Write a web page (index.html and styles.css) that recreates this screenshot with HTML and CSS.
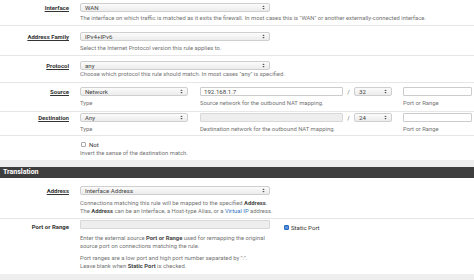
FILE: index.html
```html
<!DOCTYPE html>
<html>
<head>
<meta charset="utf-8">
<link rel="stylesheet" href="styles.css">
</head>
<body>
<div class="page">
  <div class="row r1">
    <div class="lbl"><span class="req">Interface</span></div>
    <div class="ctl">
      <div class="select w190"><span>WAN</span><svg class="arr" viewBox="0 0 4 6"><path d="M2 0.3L3.6 2.4H0.4Z M2 5.7L0.4 3.6H3.6Z"/></svg></div>
      <div class="help m2 wide">The interface on which traffic is matched as it exits the firewall. In most cases this is "WAN" or another externally-connected interface.</div>
    </div>
  </div>
  <div class="row r2">
    <div class="lbl"><span class="req">Address Family</span></div>
    <div class="ctl">
      <div class="select w190"><span>IPv4+IPv6</span><svg class="arr" viewBox="0 0 4 6"><path d="M2 0.3L3.6 2.4H0.4Z M2 5.7L0.4 3.6H3.6Z"/></svg></div>
      <div class="help m3 wide">Select the Internet Protocol version this rule applies to.</div>
    </div>
  </div>
  <div class="row r3">
    <div class="lbl"><span class="req">Protocol</span></div>
    <div class="ctl">
      <div class="select w190"><span>any</span><svg class="arr" viewBox="0 0 4 6"><path d="M2 0.3L3.6 2.4H0.4Z M2 5.7L0.4 3.6H3.6Z"/></svg></div>
      <div class="help m0 wide">Choose which protocol this rule should match. In most cases "any" is specified.</div>
    </div>
  </div>
  <div class="row r4">
    <div class="lbl"><span class="req">Source</span></div>
    <div class="ctl multi">
      <div class="col c1">
        <div class="select"><span>Network</span><svg class="arr" viewBox="0 0 4 6"><path d="M2 0.3L3.6 2.4H0.4Z M2 5.7L0.4 3.6H3.6Z"/></svg></div>
        <div class="help m3">Type</div>
      </div>
      <div class="col c2">
        <div class="addr">
          <div class="input a">192.168.1.7</div>
          <div class="slash">/</div>
          <div class="select mask"><span>32</span><svg class="arr" viewBox="0 0 4 6"><path d="M2 0.3L3.6 2.4H0.4Z M2 5.7L0.4 3.6H3.6Z"/></svg></div>
        </div>
        <div class="help m3 nowrap">Source network for the outbound NAT mapping.</div>
      </div>
      <div class="col c3">
        <div class="input"></div>
        <div class="help m3">Port or Range</div>
      </div>
    </div>
  </div>
  <div class="row r5">
    <div class="lbl"><span class="req">Destination</span></div>
    <div class="ctl multi">
      <div class="col c1">
        <div class="select"><span>Any</span><svg class="arr" viewBox="0 0 4 6"><path d="M2 0.3L3.6 2.4H0.4Z M2 5.7L0.4 3.6H3.6Z"/></svg></div>
        <div class="help m3">Type</div>
      </div>
      <div class="col c2">
        <div class="addr">
          <div class="input a disabled"></div>
          <div class="slash">/</div>
          <div class="select mask"><span>24</span><svg class="arr" viewBox="0 0 4 6"><path d="M2 0.3L3.6 2.4H0.4Z M2 5.7L0.4 3.6H3.6Z"/></svg></div>
        </div>
        <div class="help m3 nowrap">Destination network for the outbound NAT mapping.</div>
      </div>
      <div class="col c3">
        <div class="input"></div>
        <div class="help m3">Port or Range</div>
      </div>
    </div>
  </div>
  <div class="row r6">
    <div class="lbl"></div>
    <div class="ctl">
      <label class="check"><span class="box"></span><span>Not</span></label>
      <div class="help m0">Invert the sense of the destination match.</div>
    </div>
  </div>
  <div class="band"></div>
  <div class="heading">Translation</div>
  <div class="row r7">
    <div class="lbl"><span class="req">Address</span></div>
    <div class="ctl">
      <div class="select w190"><span>Interface Address</span><svg class="arr" viewBox="0 0 4 6"><path d="M2 0.3L3.6 2.4H0.4Z M2 5.7L0.4 3.6H3.6Z"/></svg></div>
      <div class="help m4 nowrap">Connections matching this rule will be mapped to the specified <b>Address</b>.<br>The <b>Address</b> can be an Interface, a Host-type Alias, or a <a href="#">Virtual IP</a> address.</div>
    </div>
  </div>
  <div class="row r8">
    <div class="lbl"><span>Port or Range</span></div>
    <div class="ctl port">
      <div class="col w190">
        <div class="input disabled"></div>
        <div class="help m5 nowrap">Enter the external source <b>Port or Range</b> used for remapping the original<br>source port on connections matching the rule.</div>
        <div class="help m4 nowrap">Port ranges are a low port and high port number separated by ":".<br>Leave blank when <b>Static Port</b> is checked.</div>
      </div>
      <label class="check static"><span class="box on"><svg viewBox="0 0 6 6"><path d="M1.2 3.1L2.5 4.4L4.9 1.6" fill="none" stroke="#fff" stroke-width="1"/></svg></span><span>Static Port</span></label>
    </div>
  </div>
  <div class="band bottom"></div>
</div>
</body>
</html>
```

FILE: styles.css
```css
html, body {
  margin: 0;
  padding: 0;
  background: #ffffff;
}
.page {
  width: 474px;
  height: 280px;
  overflow: hidden;
  font-family: Roboto, "Liberation Sans", sans-serif;
  color: #333333;
}
.row {
  display: flex;
  box-sizing: border-box;
  border-bottom: 1px solid #e6e6e6;
}
.r1 { height: 26px; padding-top: 3px; }
.r2 { height: 30px; padding-top: 6px; }
.r3 { height: 27px; padding-top: 5px; }
.r4 { height: 29px; padding-top: 4px; }
.r5 { height: 24px; padding-top: 1px; }
.r6 { height: 24px; padding-top: 4px; border-bottom: none; }
.r7 { height: 41px; padding-top: 8px; }
.r8 { height: 55px; padding-top: 1px; border-bottom: none; }
.lbl {
  flex: none;
  width: 69px;
  text-align: right;
  font-size: 6px;
  font-weight: 700;
  line-height: 9px;
  color: #333333;
  white-space: nowrap;
}
.r8 .lbl { padding-top: 2px; }
.req {
  text-decoration: underline;
}
.ctl {
  margin-left: 11px;
  flex: none;
}
.select {
  box-sizing: border-box;
  height: 9px;
  display: flex;
  align-items: center;
  justify-content: space-between;
  padding: 0 4px 0 4px;
  border: 1px solid #cfcfcf;
  border-radius: 2px;
  background: linear-gradient(#fbfbfb, #ececec);
  font-size: 6.1px;
  color: #444444;
  white-space: nowrap;
}
.w190 { width: 190px; }
.arr {
  width: 3px;
  height: 5px;
  fill: #555555;
  flex: none;
}
.input {
  box-sizing: border-box;
  height: 9px;
  border: 1px solid #cccccc;
  border-radius: 1px;
  background: #ffffff;
  font-size: 6.1px;
  line-height: 7px;
  padding-left: 3px;
  color: #444444;
}
.input.disabled {
  background: #eeeeee;
  border-color: #d8d8d8;
}
.help {
  font-size: 5.85px;
  line-height: 8px;
  color: #747474;
}
.help b { color: #444444; }
.help a { color: #2f77c2; text-decoration: none; }
.wide { width: 394px; white-space: nowrap; }
.nowrap { white-space: nowrap; }
.m0 { margin-top: 0; }
.m2 { margin-top: 2px; }
.m3 { margin-top: 3px; }
.m4 { margin-top: 4px; }
.m5 { margin-top: 5px; }
.multi {
  display: flex;
}
.col {
  display: flex;
  flex-direction: column;
}
.c1 { width: 108px; }
.c2 { width: 192px; margin-left: 12px; }
.c3 { width: 69px; margin-left: 11px; }
.addr {
  display: flex;
}
.input.a { width: 143px; }
.slash {
  width: 11px;
  text-align: center;
  font-size: 6px;
  line-height: 9px;
  color: #555555;
}
.mask { width: 38px; }
.check {
  display: flex;
  align-items: center;
  height: 9px;
  font-size: 6.1px;
  color: #333333;
  white-space: nowrap;
}
.box {
  box-sizing: border-box;
  width: 5px;
  height: 5px;
  border: 1px solid #aaaaaa;
  border-radius: 1px;
  background: #ffffff;
  margin-left: 1px;
  margin-right: 3px;
  display: flex;
  flex: none;
}
.box.on {
  background: #3b80d8;
  border-color: #2e6cc0;
}
.box svg { width: 100%; height: 100%; }
.port {
  display: flex;
  align-items: flex-start;
}
.static {
  margin-left: 13px;
  margin-top: 3px;
}
.static .box { margin-right: 2px; }
.band {
  height: 7px;
  background: #eeeeee;
}
.heading {
  height: 11px;
  background: #3e3e3e;
  color: #ffffff;
  font-size: 7px;
  font-weight: 700;
  line-height: 11px;
  padding-left: 3px;
}
.band.bottom {
  height: 7px;
}
```
